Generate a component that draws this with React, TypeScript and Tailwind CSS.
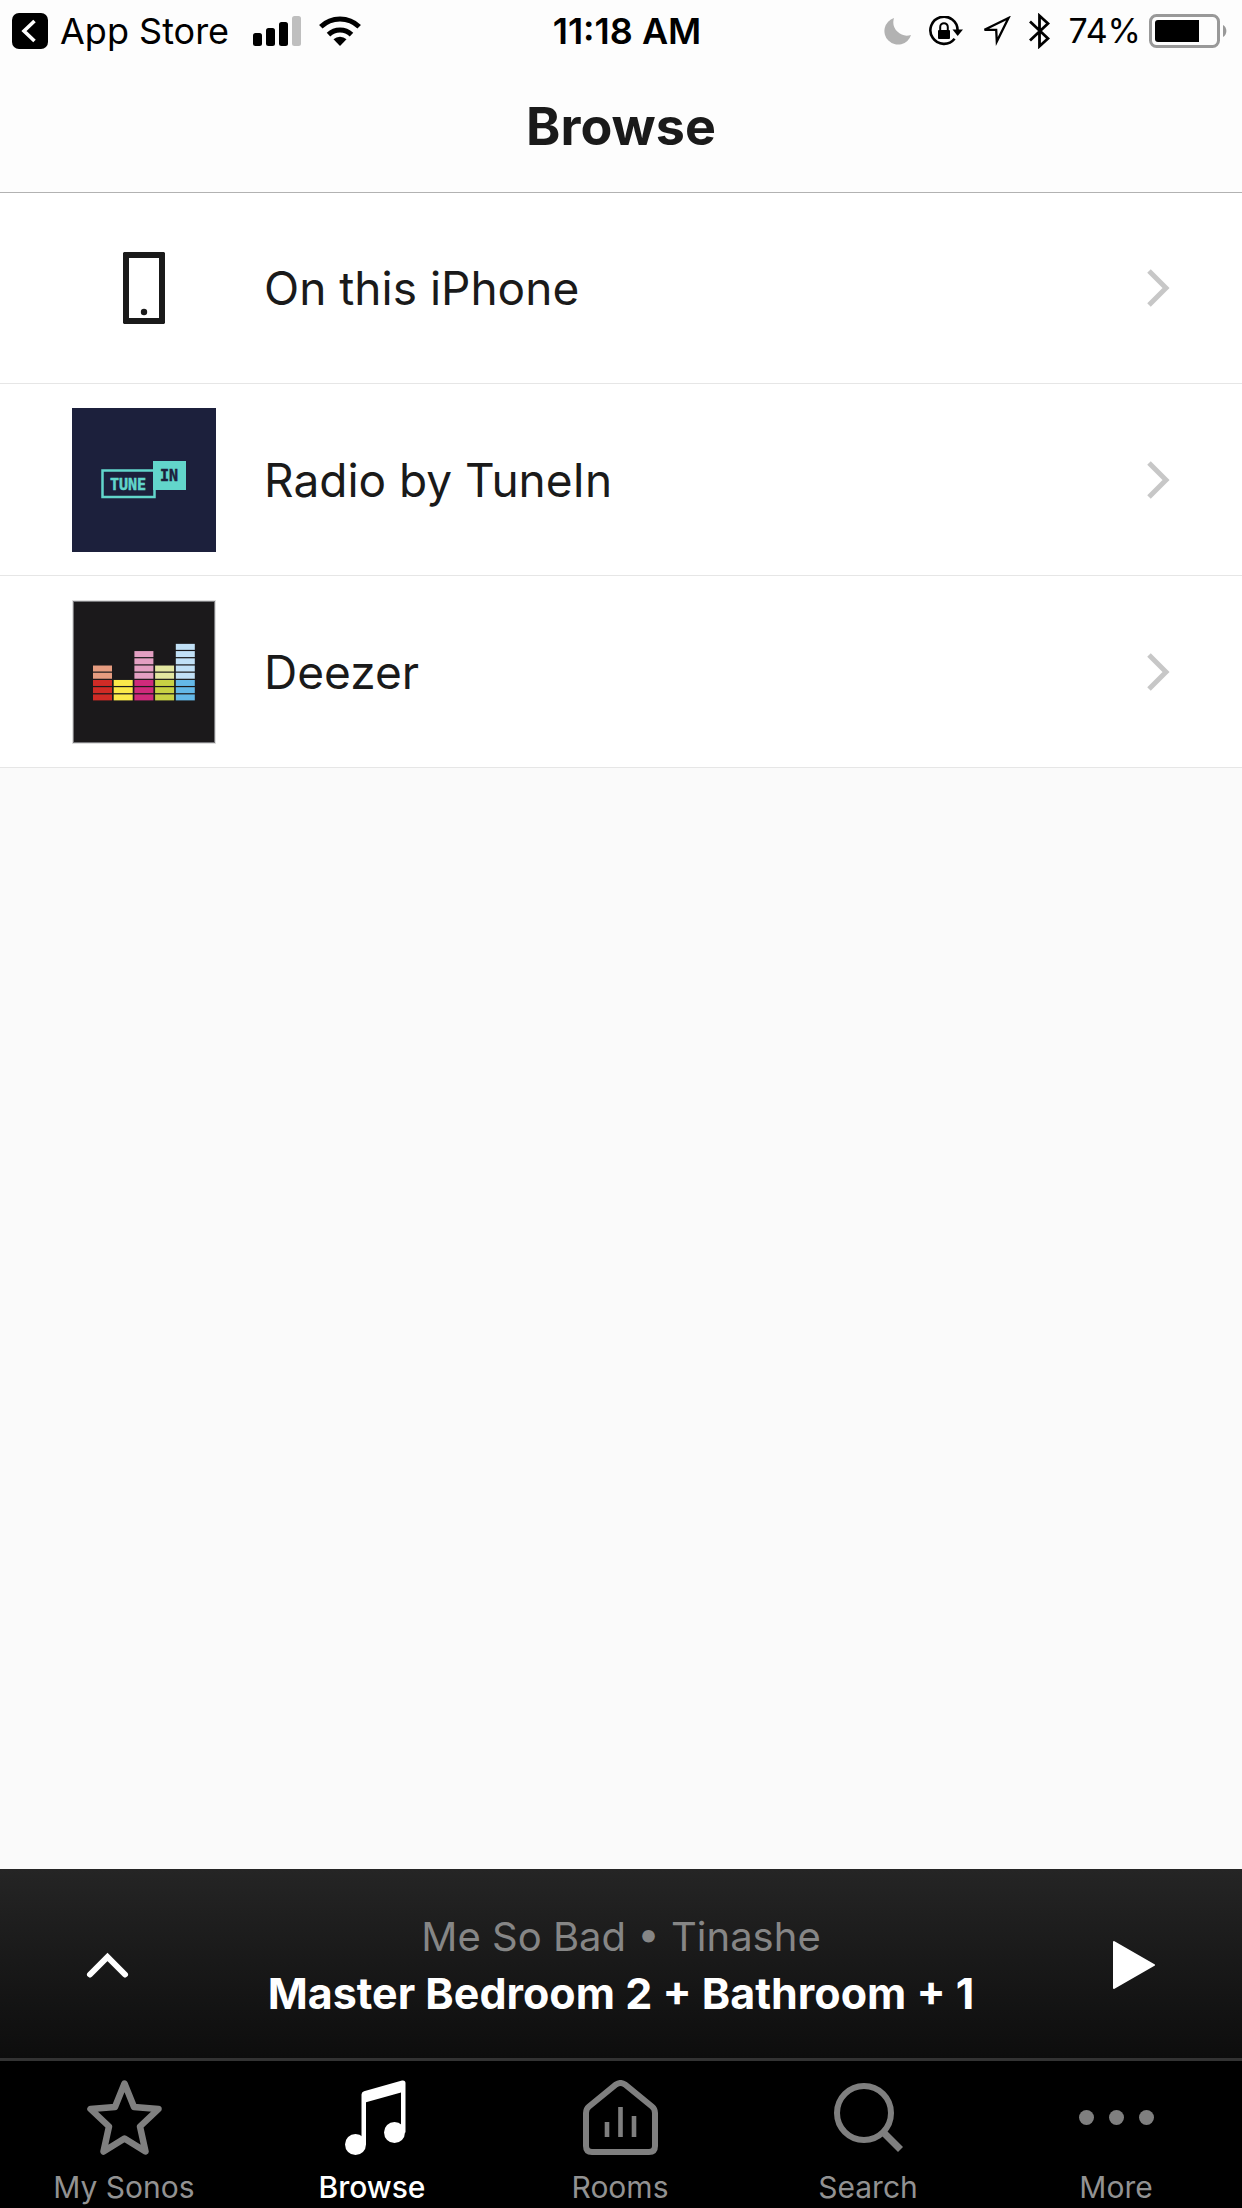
import type { ReactNode } from "react";

function SignalIcon() {
  return (
    <svg width="48" height="30" viewBox="0 0 48 30">
      <rect x="0" y="17" width="9" height="13" rx="2.5" />
      <rect x="13" y="12" width="9" height="18" rx="2.5" />
      <rect x="26" y="6" width="9" height="24" rx="2.5" />
      <rect x="39" y="0" width="9" height="30" rx="2.5" fill="#bfbfbf" />
    </svg>
  );
}

function WifiIcon() {
  return (
    <svg width="42" height="30" viewBox="0 0 42 30">
      <path d="M21 30 L14.5 23.2 A9.6 9.6 0 0 1 27.5 23.2 Z" />
      <path d="M9.5 18.6 A16.5 16.5 0 0 1 32.5 18.6" fill="none" stroke="#000" strokeWidth="5" />
      <path d="M1.8 10.8 A27.5 27.5 0 0 1 40.2 10.8" fill="none" stroke="#000" strokeWidth="5" />
    </svg>
  );
}

function MoonIcon() {
  return (
    <svg width="27" height="27" viewBox="0 0 27 27">
      <path d="M10 0 A13.6 13.6 0 1 0 27 17 A13.6 13.6 0 0 1 10 0 Z" fill="#b2b2b2" />
    </svg>
  );
}

function RotationLockIcon() {
  return (
    <svg width="34" height="30" viewBox="0 0 34 30">
      <path d="M25.6 22.8 A13.6 13.6 0 1 1 28.6 14.5" fill="none" stroke="#000" strokeWidth="2.6" />
      <path d="M23.5 13.5 H34 L28.7 20 Z" />
      <rect x="9" y="14" width="12" height="9" rx="1" />
      <path d="M11.2 14.5 V11 A3.8 3.8 0 0 1 18.8 11 V14.5" fill="none" stroke="#000" strokeWidth="2" />
    </svg>
  );
}

function LocationIcon() {
  return (
    <svg width="30" height="30" viewBox="0 0 30 30">
      <path d="M27.5 2 L3.5 13.8 H15.2 L15.8 25.5 Z" fill="none" stroke="#000" strokeWidth="2.3" />
    </svg>
  );
}

function BluetoothIcon() {
  return (
    <svg width="21" height="36" viewBox="0 0 21 36">
      <path
        d="M1 8.5 L19 25.5 L10.5 33.2 V2.8 L19 10.5 L1 27.5"
        fill="none"
        stroke="#000"
        strokeWidth="2.8"
      />
    </svg>
  );
}

function BatteryIcon() {
  return (
    <svg width="78" height="34" viewBox="0 0 78 34">
      <rect x="1.5" y="1.5" width="68" height="31" rx="6" fill="none" stroke="#999" strokeWidth="3" />
      <path d="M9 6 H50 V28 H9 A3 3 0 0 1 6 25 V9 A3 3 0 0 1 9 6 Z" />
      <path d="M74 11 A7 7 0 0 1 74 23 Z" fill="#999" />
    </svg>
  );
}

function StatusBar() {
  return (
    <div className="grid h-16 grid-cols-[1fr_auto_1fr] items-center pb-0.5 text-[36px] leading-10 text-black">
      <div className="flex items-center pl-3">
        <a href="#app-store" className="flex items-center gap-3">
          <svg width="36" height="36" viewBox="0 0 36 36">
            <rect width="36" height="36" rx="7" />
            <path d="M22.5 8 L12 18 L22.5 28" fill="none" stroke="#fff" strokeWidth="3.6" />
          </svg>
          App Store
        </a>
        <div className="flex items-center gap-[18px] pl-6">
          <SignalIcon />
          <WifiIcon />
        </div>
      </div>
      <time className="pl-3 font-semibold">11:18 AM</time>
      <div className="flex items-center justify-end gap-[18px] pr-[15px]">
        <MoonIcon />
        <RotationLockIcon />
        <LocationIcon />
        <BluetoothIcon />
        <div className="flex items-center gap-2 text-[34px]">
          74%
          <BatteryIcon />
        </div>
      </div>
    </div>
  );
}

function PhoneArt() {
  return (
    <svg width="144" height="144" viewBox="0 0 144 144">
      <path d="M52 36 H92 L93 37 V107 L92 108 H52 L51 107 V37 Z M57 42 V102 H87 V42 Z" fill="#1a1a1a" fillRule="evenodd" />
      <circle cx="72" cy="96" r="3.2" fill="#1a1a1a" />
    </svg>
  );
}

function TuneInArt() {
  return (
    <svg width="144" height="144" viewBox="0 0 144 144" className="font-['DejaVu_Sans_Mono',monospace] font-bold">
      <rect width="144" height="144" fill="#1c203c" />
      <rect x="30.5" y="62.5" width="52" height="26.5" fill="none" stroke="#62d6cb" strokeWidth="2.5" />
      <rect x="81" y="53" width="33" height="29" fill="#62d6cb" />
      <text x="38" y="82" fontSize="15" fill="#62d6cb" stroke="#62d6cb" strokeWidth="0.5">TUNE</text>
      <text x="88" y="73" fontSize="15" fill="#1c203c" stroke="#1c203c" strokeWidth="0.5">IN</text>
    </svg>
  );
}

const EQUALIZER = [
  { total: 5, base: "#d12b26", top: "#e69c80" },
  { total: 3, base: "#fbe94a", top: "#fbe94a" },
  { total: 7, base: "#cf2a7b", top: "#e39fc2" },
  { total: 5, base: "#c8d144", top: "#e3e6a0" },
  { total: 8, base: "#64b8e8", top: "#c1e0f6" },
];

function DeezerArt() {
  return (
    <svg width="144" height="144" viewBox="0 0 144 144">
      <rect width="144" height="144" fill="#dedede" />
      <rect x="1" y="1" width="142" height="142" fill="#77777a" />
      <rect x="2" y="2" width="140" height="140" fill="#1b191b" />
      {EQUALIZER.map((bar, col) =>
        Array.from({ length: bar.total }, (_, i) => (
          <rect
            key={`${col}-${i}`}
            x={21 + col * 20.7}
            y={94.4 - i * 7.22}
            width="19"
            height="6"
            fill={i < 3 ? bar.base : bar.top}
          />
        )),
      )}
    </svg>
  );
}

const SOURCES = [
  { label: "On this iPhone", art: <PhoneArt /> },
  { label: "Radio by TuneIn", art: <TuneInArt /> },
  { label: "Deezer", art: <DeezerArt /> },
];

function SourceRow({ label, art }: { label: string; art: ReactNode }) {
  return (
    <li className="border-b border-[#e6e6e6] bg-white">
      <button className="flex h-[191px] w-full items-center gap-12 px-[72px] pt-px text-left text-[46px] leading-[60px] text-[#1a1a1a]">
        {art}
        <span className="flex-1">{label}</span>
        <svg width="24" height="40" viewBox="0 0 24 40">
          <path d="M3 3 L20 20 L3 37" fill="none" stroke="#c7c7c7" strokeWidth="5" />
        </svg>
      </button>
    </li>
  );
}

function MiniPlayer() {
  return (
    <section className="flex h-[189px] items-center justify-between bg-linear-to-b from-[#252525] to-[#0d0d0d] px-[84px] pt-0.5">
      <button aria-label="Expand player">
        <svg width="48" height="48" viewBox="0 0 48 48">
          <path d="M6 33.5 L23.5 16 L41 33.5" fill="none" stroke="#fff" strokeWidth="6" strokeLinecap="round" />
        </svg>
      </button>
      <div className="text-center leading-[57px]">
        <p className="text-[40px] text-[#868686]">Me So Bad • Tinashe</p>
        <p className="text-[43px] font-bold text-white">Master Bedroom 2 + Bathroom + 1</p>
      </div>
      <button aria-label="Play">
        <svg width="48" height="48" viewBox="0 0 48 48">
          <path d="M4 1 L44 24 L4 47 Z" fill="#fff" stroke="#fff" strokeWidth="2" strokeLinejoin="round" />
        </svg>
      </button>
    </section>
  );
}

const TABS = [
  {
    label: "My Sonos",
    icon: (
      <path
        d="M37.5 3.5 L47 27 L71.5 29 L53 46.5 L58.5 71.5 L37.5 58.5 L16.5 71.5 L22 46.5 L3.5 29 L28 27 Z"
        fill="none"
        stroke="currentColor"
        strokeWidth="6.5"
        strokeLinejoin="round"
      />
    ),
  },
  {
    label: "Browse",
    active: true,
    icon: (
      <g fill="currentColor">
        <circle cx="20.5" cy="64.5" r="10.5" />
        <circle cx="59.5" cy="52.5" r="10.5" />
        <path d="M26.5 14.5 Q26.5 12 29 11.2 L67 0.5 Q70.5 0 70.5 3 V52.5 H66 V12.5 L31 22.3 V64.5 H26.5 Z" />
      </g>
    ),
  },
  {
    label: "Rooms",
    icon: (
      <g fill="none" stroke="currentColor">
        <path
          d="M33 4.5 Q37.5 1.5 42 4.5 L69 26.5 Q72 29 72 33 V66 Q72 72 66 72 H9 Q3 72 3 66 V33 Q3 29 6 26.5 Z"
          strokeWidth="6"
        />
        <path d="M24 42 V57 M37.5 27 V57 M51 36 V57" strokeWidth="4.6" />
      </g>
    ),
  },
  {
    label: "Search",
    icon: (
      <g fill="none" stroke="currentColor" strokeWidth="6">
        <circle cx="33" cy="33" r="27" />
        <path d="M52 52 L69.5 69.5" strokeWidth="7" />
      </g>
    ),
  },
  {
    label: "More",
    icon: (
      <g fill="currentColor">
        <circle cx="7.5" cy="37.5" r="7.5" />
        <circle cx="37.5" cy="37.5" r="7.5" />
        <circle cx="67.5" cy="37.5" r="7.5" />
      </g>
    ),
  },
];

function TabBar() {
  return (
    <nav className="grid grid-cols-5 border-t-[3px] border-[#333] bg-black pt-[19px] pr-0.5 pb-[3px]">
      {TABS.map((tab) => (
        <a
          key={tab.label}
          href={`#${tab.label}`}
          className={`flex flex-col items-center gap-[14px] text-[30px] leading-9 ${
            tab.active ? "font-medium text-white" : "text-[#929292]"
          }`}
        >
          <svg
            width="75"
            height="75"
            viewBox="0 0 75 75"
            className={tab.active ? "text-white" : "text-[#7f7f7f]"}
          >
            {tab.icon}
          </svg>
          {tab.label}
        </a>
      ))}
    </nav>
  );
}

export default function App() {
  return (
    <div className="flex min-h-screen flex-col bg-[#fafafa] font-['Inter',sans-serif]">
      <header className="relative z-10 bg-[#fdfdfd] shadow-[0_1px_0_#b2b2b2]">
        <StatusBar />
        <h1 className="pt-[33px] pb-[35px] text-center text-[52px] leading-[60px] font-bold text-[#1a1a1a]">Browse</h1>
      </header>
      <main className="flex-1">
        <ul>
          {SOURCES.map((source) => (
            <SourceRow key={source.label} {...source} />
          ))}
        </ul>
      </main>
      <footer>
        <MiniPlayer />
        <TabBar />
      </footer>
    </div>
  );
}
